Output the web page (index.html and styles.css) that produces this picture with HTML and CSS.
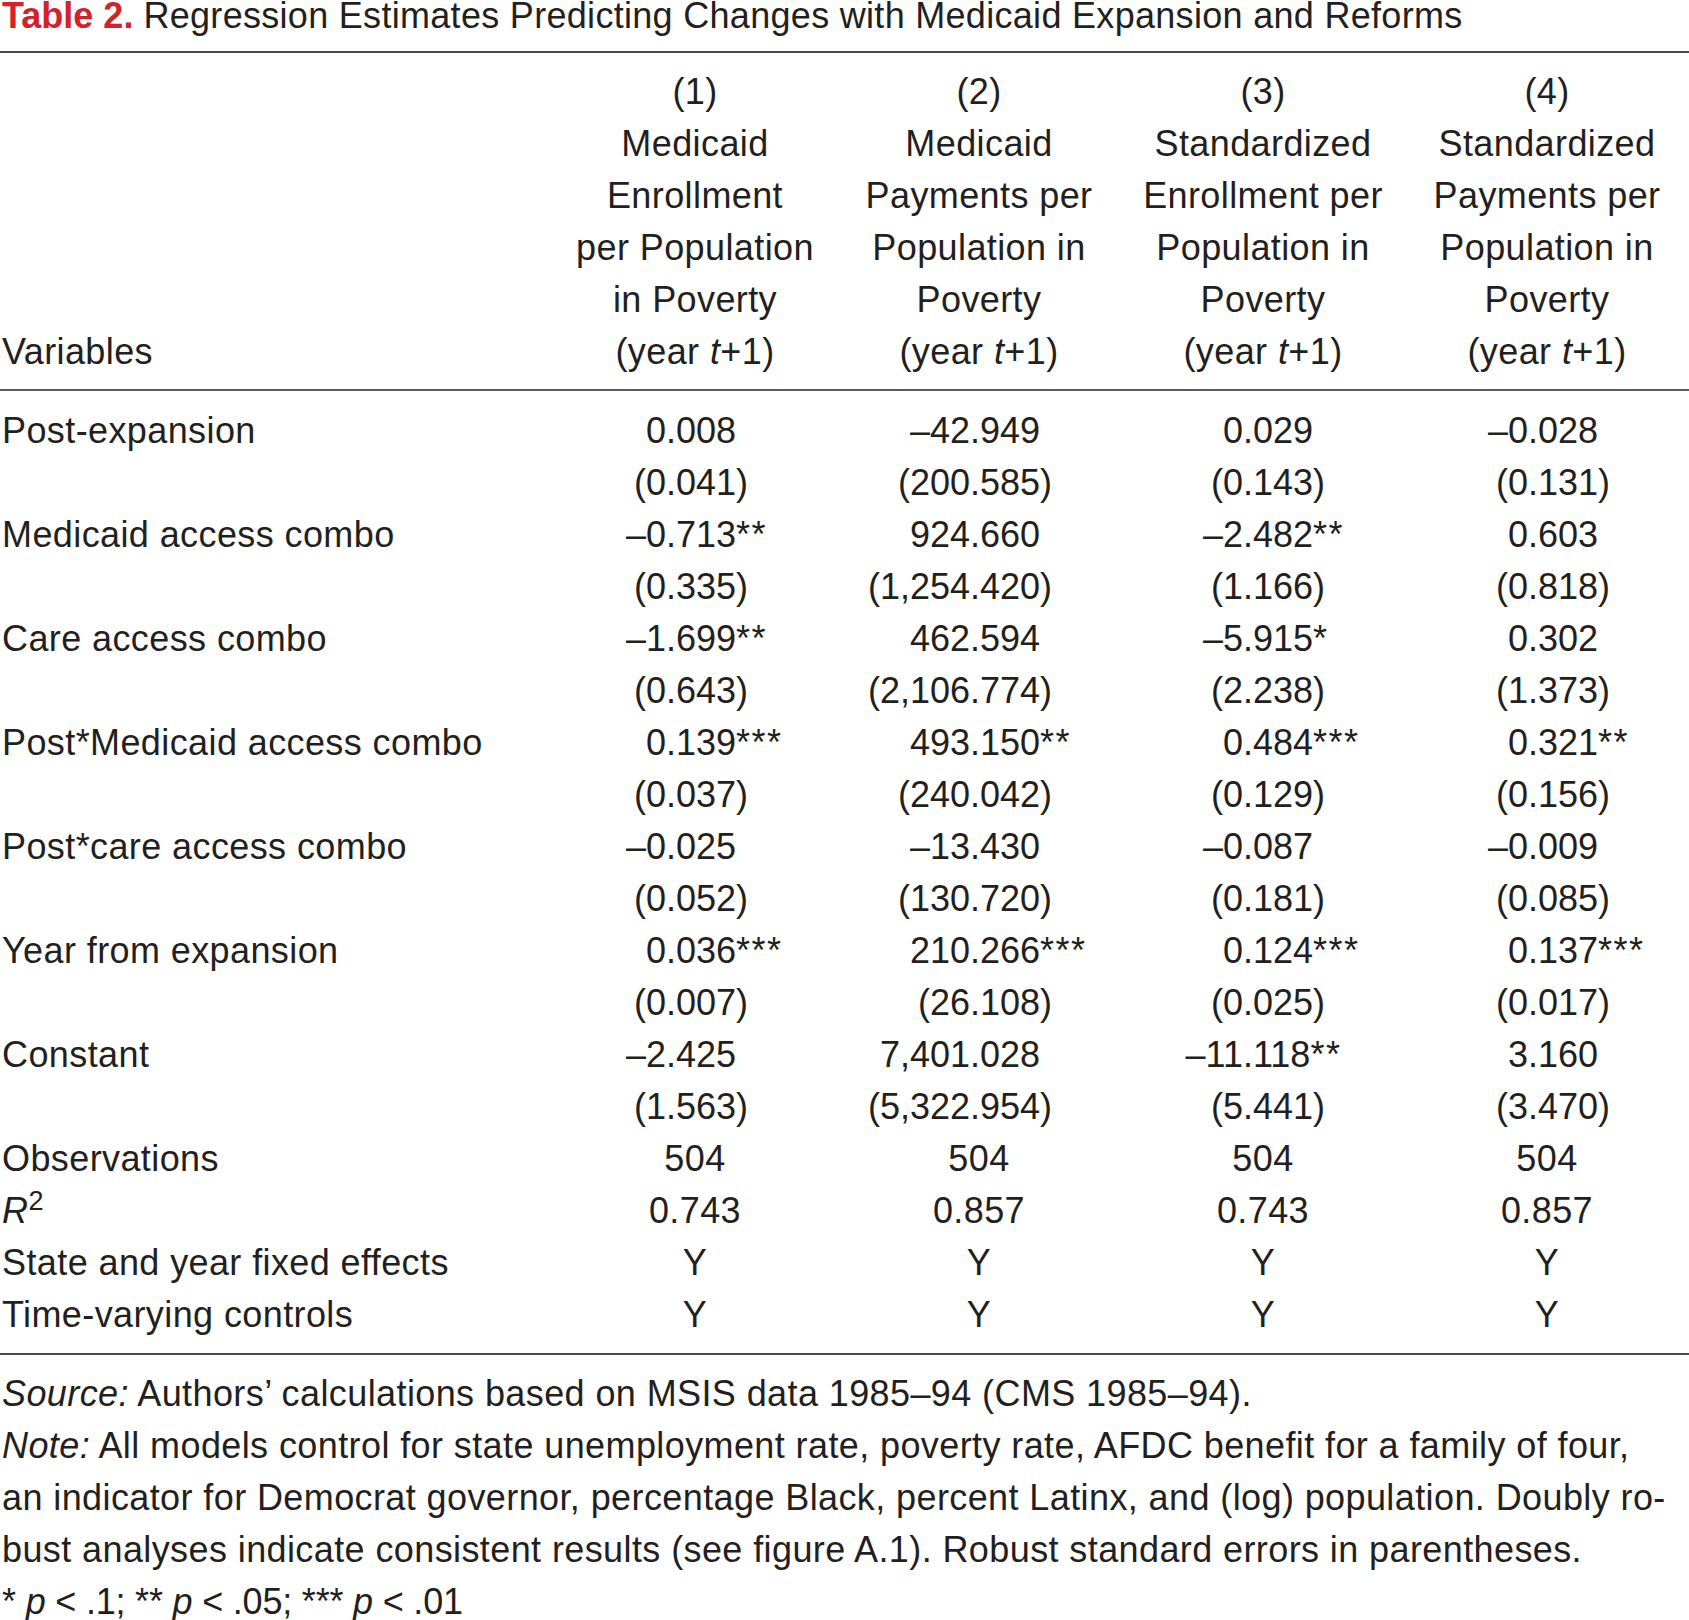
FILE: index.html
```html
<!DOCTYPE html>
<html lang="en">
<head>
<meta charset="utf-8">
<title>Table 2</title>
<link rel="stylesheet" href="styles.css">
</head>
<body>
<div class="page">
  <h1 class="title"><span class="label">Table 2.</span> <span class="caption">Regression Estimates Predicting Changes with Medicaid Expansion and Reforms</span></h1>
  <table class="reg">
    <colgroup>
      <col class="c-var"><col class="c-n"><col class="c-n"><col class="c-n"><col class="c-n">
    </colgroup>
    <thead>
      <tr>
        <th class="var">Variables</th>
        <th class="hd">(1)<br>Medicaid<br>Enrollment<br>per Population<br>in Poverty<br>(year <i>t</i>+1)</th>
        <th class="hd">(2)<br>Medicaid<br>Payments per<br>Population in<br>Poverty<br>(year <i>t</i>+1)</th>
        <th class="hd">(3)<br>Standardized<br>Enrollment per<br>Population in<br>Poverty<br>(year <i>t</i>+1)</th>
        <th class="hd">(4)<br>Standardized<br>Payments per<br>Population in<br>Poverty<br>(year <i>t</i>+1)</th>
      </tr>
    </thead>
    <tbody class="coefs">
      <tr class="first"><td>Post-expansion</td>
        <td class="n1"><span class="i">0</span>.008</td>
        <td class="n2"><span class="i">–42</span>.949</td>
        <td class="n3"><span class="i">0</span>.029</td>
        <td class="n4"><span class="i">–0</span>.028</td></tr>
      <tr><td></td>
        <td class="n1"><span class="i">(0</span>.041)</td>
        <td class="n2"><span class="i">(200</span>.585)</td>
        <td class="n3"><span class="i">(0</span>.143)</td>
        <td class="n4"><span class="i">(0</span>.131)</td></tr>
      <tr><td>Medicaid access combo</td>
        <td class="n1"><span class="i">–0</span>.713<span class="st">**</span></td>
        <td class="n2"><span class="i">924</span>.660</td>
        <td class="n3"><span class="i">–2</span>.482<span class="st">**</span></td>
        <td class="n4"><span class="i">0</span>.603</td></tr>
      <tr><td></td>
        <td class="n1"><span class="i">(0</span>.335)</td>
        <td class="n2"><span class="i">(1,254</span>.420)</td>
        <td class="n3"><span class="i">(1</span>.166)</td>
        <td class="n4"><span class="i">(0</span>.818)</td></tr>
      <tr><td>Care access combo</td>
        <td class="n1"><span class="i">–1</span>.699<span class="st">**</span></td>
        <td class="n2"><span class="i">462</span>.594</td>
        <td class="n3"><span class="i">–5</span>.915<span class="st">*</span></td>
        <td class="n4"><span class="i">0</span>.302</td></tr>
      <tr><td></td>
        <td class="n1"><span class="i">(0</span>.643)</td>
        <td class="n2"><span class="i">(2,106</span>.774)</td>
        <td class="n3"><span class="i">(2</span>.238)</td>
        <td class="n4"><span class="i">(1</span>.373)</td></tr>
      <tr><td>Post*Medicaid access combo</td>
        <td class="n1"><span class="i">0</span>.139<span class="st">***</span></td>
        <td class="n2"><span class="i">493</span>.150<span class="st">**</span></td>
        <td class="n3"><span class="i">0</span>.484<span class="st">***</span></td>
        <td class="n4"><span class="i">0</span>.321<span class="st">**</span></td></tr>
      <tr><td></td>
        <td class="n1"><span class="i">(0</span>.037)</td>
        <td class="n2"><span class="i">(240</span>.042)</td>
        <td class="n3"><span class="i">(0</span>.129)</td>
        <td class="n4"><span class="i">(0</span>.156)</td></tr>
      <tr><td>Post*care access combo</td>
        <td class="n1"><span class="i">–0</span>.025</td>
        <td class="n2"><span class="i">–13</span>.430</td>
        <td class="n3"><span class="i">–0</span>.087</td>
        <td class="n4"><span class="i">–0</span>.009</td></tr>
      <tr><td></td>
        <td class="n1"><span class="i">(0</span>.052)</td>
        <td class="n2"><span class="i">(130</span>.720)</td>
        <td class="n3"><span class="i">(0</span>.181)</td>
        <td class="n4"><span class="i">(0</span>.085)</td></tr>
      <tr><td>Year from expansion</td>
        <td class="n1"><span class="i">0</span>.036<span class="st">***</span></td>
        <td class="n2"><span class="i">210</span>.266<span class="st">***</span></td>
        <td class="n3"><span class="i">0</span>.124<span class="st">***</span></td>
        <td class="n4"><span class="i">0</span>.137<span class="st">***</span></td></tr>
      <tr><td></td>
        <td class="n1"><span class="i">(0</span>.007)</td>
        <td class="n2"><span class="i">(26</span>.108)</td>
        <td class="n3"><span class="i">(0</span>.025)</td>
        <td class="n4"><span class="i">(0</span>.017)</td></tr>
      <tr><td>Constant</td>
        <td class="n1"><span class="i">–2</span>.425</td>
        <td class="n2"><span class="i">7,401</span>.028</td>
        <td class="n3"><span class="i">–11</span>.118<span class="st">**</span></td>
        <td class="n4"><span class="i">3</span>.160</td></tr>
      <tr><td></td>
        <td class="n1"><span class="i">(1</span>.563)</td>
        <td class="n2"><span class="i">(5,322</span>.954)</td>
        <td class="n3"><span class="i">(5</span>.441)</td>
        <td class="n4"><span class="i">(3</span>.470)</td></tr>
      <tr><td>Observations</td><td class="ctr">504</td><td class="ctr">504</td><td class="ctr">504</td><td class="ctr">504</td></tr>
      <tr><td><i>R</i><sup>2</sup></td><td class="ctr">0.743</td><td class="ctr">0.857</td><td class="ctr">0.743</td><td class="ctr">0.857</td></tr>
      <tr><td>State and year fixed effects</td><td class="ctr">Y</td><td class="ctr">Y</td><td class="ctr">Y</td><td class="ctr">Y</td></tr>
      <tr class="last"><td>Time-varying controls</td><td class="ctr">Y</td><td class="ctr">Y</td><td class="ctr">Y</td><td class="ctr">Y</td></tr>
    </tbody>
  </table>
  <div class="notes">
    <p><i>Source:</i> Authors’ calculations based on MSIS data 1985–94 (CMS 1985–94).</p>
    <p><i>Note:</i> All models control for state unemployment rate, poverty rate, AFDC benefit for a family of four,<br>an indicator for Democrat governor, percentage Black, percent Latinx, and (log) population. Doubly ro-<br>bust analyses indicate consistent results (see figure A.1). Robust standard errors in parentheses.</p>
    <p class="sig">* <i>p</i> &lt; .1; ** <i>p</i> &lt; .05; *** <i>p</i> &lt; .01</p>
  </div>
</div>
</body>
</html>
```

FILE: styles.css
```css
html, body {
  margin: 0;
  padding: 0;
  background: #ffffff;
}

.page {
  width: 1689px;
  color: #231f20;
  font-family: "Liberation Sans", Arial, sans-serif;
  font-size: 36px;
  line-height: 52px;
  letter-spacing: 0.4px;
}

.title {
  margin: 0;
  padding-left: 2px;
  font-size: 36px;
  line-height: 32px;
  font-weight: normal;
  letter-spacing: 0;
  height: 53px;
  border-bottom: 2px solid #4a4a4a;
  box-sizing: border-box;
}

.title .label {
  color: #d3222b;
  font-weight: bold;
}

.title .caption {
  letter-spacing: 0.3px;
}

.reg {
  border-collapse: collapse;
  table-layout: fixed;
  width: 1689px;
}

.c-var { width: 553px; }
.c-n { width: 284px; }

.reg th, .reg td {
  padding: 0;
  font-weight: normal;
  white-space: nowrap;
}

.reg thead tr {
  border-bottom: 2px solid #5a5a5a;
}

.reg thead th {
  padding-top: 13px;
  padding-bottom: 11px;
  vertical-align: bottom;
}

.reg th.var {
  text-align: left;
  padding-left: 2px;
}

.reg th.hd {
  text-align: center;
}

.coefs td:first-child {
  padding-left: 2px;
  text-align: left;
}

.coefs td[class^="n"] {
  letter-spacing: 0;
}

.coefs .st {
  letter-spacing: 1.5px;
}

.coefs tr.first td {
  padding-top: 14px;
}

.coefs tr.last td {
  padding-bottom: 12px;
}

.coefs tr.last {
  border-bottom: 2px solid #4a4a4a;
}

.coefs td.ctr {
  text-align: center;
}

.coefs .i {
  display: inline-block;
  text-align: right;
}

.n1 .i { width: 113px; }
.n2 .i { width: 133px; }
.n3 .i { width: 122px; }
.n4 .i { width: 123px; }

sup {
  font-size: 27px;
  line-height: 0;
  vertical-align: 13px;
}

.notes {
  padding-top: 13px;
  padding-left: 2px;
}

.notes p {
  margin: 0;
  white-space: nowrap;
}

.notes p.sig {
  letter-spacing: -0.2px;
}
```
